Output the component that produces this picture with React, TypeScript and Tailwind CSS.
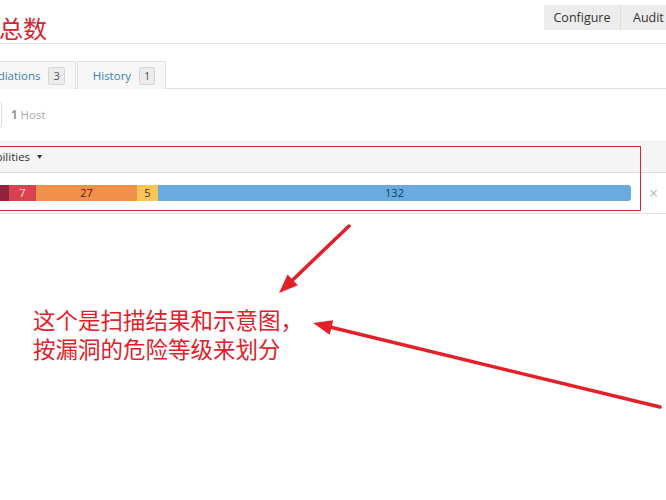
import React from "react";

function arrowHead(x1: number, y1: number, x2: number, y2: number, len: number, half: number) {
  const dx = x2 - x1;
  const dy = y2 - y1;
  const d = Math.hypot(dx, dy);
  const ux = dx / d;
  const uy = dy / d;
  const bx = x2 - ux * len;
  const by = y2 - uy * len;
  const px = -uy;
  const py = ux;
  return `${x2},${y2} ${bx + px * half},${by + py * half} ${bx - px * half},${by - py * half}`;
}

function Arrow({ x1, y1, x2, y2 }: { x1: number; y1: number; x2: number; y2: number }) {
  const dx = x2 - x1;
  const dy = y2 - y1;
  const d = Math.hypot(dx, dy);
  const ex = x2 - (dx / d) * 12;
  const ey = y2 - (dy / d) * 12;
  return (
    <g>
      <line x1={x1} y1={y1} x2={ex} y2={ey} stroke="#e3202a" strokeWidth={3.5} strokeLinecap="round" />
      <polygon points={arrowHead(x1, y1, x2, y2, 19, 7.5)} fill="#e3202a" />
    </g>
  );
}

export default function App() {
  return (
    <div className="relative w-[666px] h-[500px] overflow-hidden bg-white font-['Open_Sans','Noto_Sans_CJK_SC',sans-serif] text-[#333]">
      {/* Header */}
      <div className="flex justify-between items-start h-[44px] border-b border-[#e3e3e3]">
        <div className="pt-[13px] text-[24px] leading-[30px] text-[#d8232f] font-['Noto_Sans_CJK_SC',sans-serif] -ml-[1px]">
          总数
        </div>
        <div className="flex mt-[5px] -mr-[41px]">
          <div className="w-[77px] h-[25px] pt-[1px] flex items-center justify-center bg-[#ececec] text-[12.5px] text-[#333] border-r border-[#dcdcdc]">
            Configure
          </div>
          <div className="w-[86px] h-[25px] pt-[1px] pl-[12px] flex items-center bg-[#ececec] text-[12.5px] text-[#333]">
            Audit Trail
          </div>
        </div>
      </div>

      {/* Tabs */}
      <div className="mt-[17px] flex h-[28px] border-b border-[#dddddd]">
        <div className="flex items-center h-[28px] -ml-[46px] pl-[12px] pr-[10px] bg-[#f7f7f7] border border-b-0 border-[#dddddd] text-[11.5px] text-[#3a7fb8]">
          Remediations
          <span className="ml-[8px] px-[4px] leading-[16px] bg-[#ebebeb] border border-[#d6d6d6] text-[#555] text-[11px] rounded-[2px]">3</span>
        </div>
        <div className="flex items-center h-[28px] ml-[1px] pl-[15px] pr-[10px] bg-[#f7f7f7] border border-b-0 border-[#dddddd] text-[11.5px] text-[#3a7fb8]">
          History
          <span className="ml-[8px] px-[4px] leading-[16px] bg-[#ebebeb] border border-[#d6d6d6] text-[#555] text-[11px] rounded-[2px]">1</span>
        </div>
      </div>

      {/* Host row */}
      <div className="h-[52px] flex items-center">
        <div className="w-[20px] h-[26px] -ml-[18px] border border-[#dddddd] rounded-[3px]" />
        <div className="ml-[9px] text-[11.5px] text-[#aaaaaa]">
          <span className="font-bold text-[#999]">1</span> Host
        </div>
      </div>

      {/* Table */}
      <div className="border-t border-[#eeeeee]">
        <div className="h-[31px] bg-[#f5f5f5] border-b border-[#dedede] flex items-center">
          <span className="-ml-[46px] text-[11.5px] text-[#333]">Vulnerabilities</span>
          <span className="ml-[7px] text-[5px] text-[#333]">▼</span>
        </div>
        <div className="h-[41px] border-b border-[#e2e2e2] flex items-center">
          <div className="flex h-[16px] w-[631px] text-[11px] leading-[16px]">
            <div className="w-[9px] bg-[#93223f]" />
            <div className="w-[27px] bg-[#d9434f] text-[#fde3e3] text-center">7</div>
            <div className="w-[101px] bg-[#f0904a] text-[#4a2810] text-center">27</div>
            <div className="w-[21px] bg-[#f9c655] text-[#4a3408] text-center">5</div>
            <div className="flex-1 bg-[#67abe0] text-[#173b5e] text-center rounded-r-[3px]">132</div>
          </div>
          <div className="ml-[18px] text-[16px] text-[#bbbbbb] leading-none">×</div>
        </div>
      </div>

      {/* Red annotation rectangle */}
      <div className="absolute left-[-2px] top-[146px] w-[643px] h-[65px] border-[1.5px] border-[#e0242c]" />

      {/* Annotation text */}
      <div className="absolute left-[33px] top-[305px] text-[22.5px] leading-[29px] text-[#e3202a] font-['Noto_Sans_CJK_SC',sans-serif]">
        <div>这个是扫描结果和示意图，</div>
        <div>按漏洞的危险等级来划分</div>
      </div>

      {/* Arrows */}
      <svg className="absolute left-0 top-0" width={666} height={500} viewBox="0 0 666 500">
        <Arrow x1={349} y1={226} x2={279} y2={293} />
        <Arrow x1={660} y1={407} x2={313} y2={323} />
      </svg>
    </div>
  );
}
